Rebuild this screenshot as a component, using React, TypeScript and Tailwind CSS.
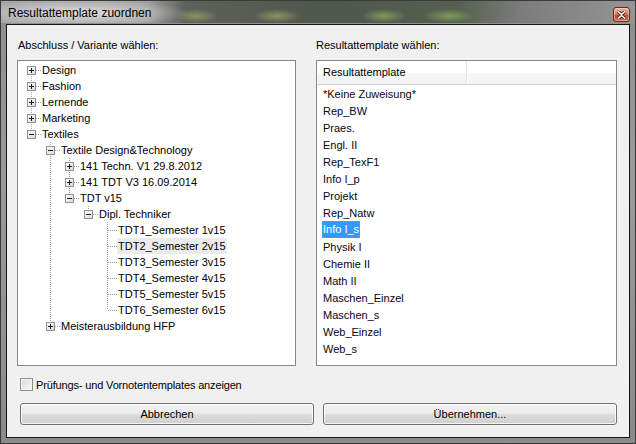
import React from "react";

type TreeNode = {
  label: string;
  anc: boolean[];
  exp?: "+" | "-";
  next: boolean;
  first?: boolean;
  hover?: boolean;
};

const tree: TreeNode[] = [
  { label: "Design", anc: [], exp: "+", next: true, first: true },
  { label: "Fashion", anc: [], exp: "+", next: true },
  { label: "Lernende", anc: [], exp: "+", next: true },
  { label: "Marketing", anc: [], exp: "+", next: true },
  { label: "Textiles", anc: [], exp: "-", next: false },
  { label: "Textile Design&Technology", anc: [false], exp: "-", next: true },
  { label: "141 Techn. V1 29.8.2012", anc: [false, true], exp: "+", next: true },
  { label: "141 TDT V3 16.09.2014", anc: [false, true], exp: "+", next: true },
  { label: "TDT v15", anc: [false, true], exp: "-", next: false },
  { label: "Dipl. Techniker", anc: [false, true, false], exp: "-", next: false },
  { label: "TDT1_Semester 1v15", anc: [false, true, false, false], next: true },
  { label: "TDT2_Semester 2v15", anc: [false, true, false, false], next: true, hover: true },
  { label: "TDT3_Semester 3v15", anc: [false, true, false, false], next: true },
  { label: "TDT4_Semester 4v15", anc: [false, true, false, false], next: true },
  { label: "TDT5_Semester 5v15", anc: [false, true, false, false], next: true },
  { label: "TDT6_Semester 6v15", anc: [false, true, false, false], next: false },
  { label: "Meisterausbildung HFP", anc: [false], exp: "+", next: false },
];

const templates = [
  "*Keine Zuweisung*",
  "Rep_BW",
  "Praes.",
  "Engl. II",
  "Rep_TexF1",
  "Info I_p",
  "Projekt",
  "Rep_Natw",
  "Info I_s",
  "Physik I",
  "Chemie II",
  "Math II",
  "Maschen_Einzel",
  "Maschen_s",
  "Web_Einzel",
  "Web_s",
];

const dot = "#a0a0a0";

function Cell({ up, down, right, exp }: { up?: boolean; down?: boolean; right?: boolean; exp?: "+" | "-" }) {
  return (
    <svg width="19" height="16" className="shrink-0" shapeRendering="crispEdges">
      {up && <line x1="9.5" y1="0" x2="9.5" y2="8" stroke={dot} strokeDasharray="1 1" />}
      {down && <line x1="9.5" y1="8" x2="9.5" y2="16" stroke={dot} strokeDasharray="1 1" />}
      {right && <line x1="10" y1="8.5" x2="19" y2="8.5" stroke={dot} strokeDasharray="1 1" />}
      {exp && (
        <g>
          <rect x="5.5" y="4.5" width="8" height="8" fill="url(#expGrad)" stroke="#919191" />
          <line x1="7" y1="8.5" x2="12" y2="8.5" stroke="#1b1b1b" />
          {exp === "+" && <line x1="9.5" y1="6" x2="9.5" y2="11" stroke="#1b1b1b" />}
        </g>
      )}
    </svg>
  );
}

function TreeRow({ node }: { node: TreeNode }) {
  return (
    <div className="flex h-4 items-center pl-[4px]">
      {node.anc.map((a, i) => (
        <Cell key={i} up={a} down={a} />
      ))}
      <Cell up={!node.first} down={node.next} right exp={node.exp} />
      <span className={`px-[1px] leading-[16px] whitespace-nowrap ${node.hover ? "bg-[#ebebeb]" : ""}`}>
        {node.label}
      </span>
    </div>
  );
}

export default function App() {
  return (
    <div className="w-[636px] h-[444px] flex flex-col border border-[#3a3a3a] bg-[linear-gradient(to_bottom,#8e8e8e,#9a9a9a_40%,#8a8a8a)] font-['Liberation_Sans',Arial,sans-serif] text-[11px] text-black">
      <svg width="0" height="0" className="absolute">
        <defs>
          <linearGradient id="expGrad" x1="0" y1="0" x2="1" y2="1">
            <stop offset="0" stopColor="#ffffff" />
            <stop offset="1" stopColor="#d6d6d6" />
          </linearGradient>
        </defs>
      </svg>

      {/* title bar */}
      <div className="h-[22px] flex items-center justify-between pl-[7px] pr-[5px] bg-[radial-gradient(ellipse_110px_14px_at_78px_12px,rgba(226,226,226,0.95),transparent),radial-gradient(ellipse_22px_7px_at_195px_15px,#8a9460,transparent),radial-gradient(ellipse_24px_7px_at_276px_15px,#88945e,transparent),radial-gradient(ellipse_22px_7px_at_383px_15px,#7f9a5c,transparent),radial-gradient(ellipse_26px_7px_at_448px_15px,#7f9a5c,transparent),linear-gradient(to_right,#a4a4a4_0%,#a0a0a0_23%,#5e615b_29%,#50574c_50%,#556050_72%,#7c7c7c_82%,#949494_100%)]">
        <span className="text-[12px] leading-[14px] mt-[1px] text-black">Resultattemplate zuordnen</span>
        <div className="mt-[5px] w-[17px] h-[15px] rounded-[3px] border border-[#6b2a1e] bg-[linear-gradient(to_bottom,#eab3a3,#d98770_45%,#c64a30_55%,#d0644a)] flex items-center justify-center shadow-[inset_0_0_0_1px_rgba(255,220,210,0.5)]">
          <svg width="9" height="8" viewBox="0 0 9 8">
            <path d="M1 0.5 L4.5 3.5 L8 0.5 M1 7.5 L4.5 4.5 L8 7.5" stroke="#3a1a14" strokeWidth="3" fill="none" />
            <path d="M1 0.5 L4.5 3.5 L8 0.5 M1 7.5 L4.5 4.5 L8 7.5" stroke="#ffffff" strokeWidth="1.6" fill="none" />
          </svg>
        </div>
      </div>

      {/* client area */}
      <div className="mx-[5px] mb-[5px] mt-[1px] flex-1 border border-[#141414] bg-[#f0f0f0] flex flex-col pl-[10px] pr-[12px]">
        <div className="flex gap-[20px]">
          <div className="flex flex-col w-[279px]">
            <div className="pt-[13px] pb-[8px] pl-[1px] leading-[14px]">Abschluss / Variante wählen:</div>
            <div className="h-[306px] border border-[#828790] bg-white pt-[1px]">
              {tree.map((n, i) => (
                <TreeRow key={i} node={n} />
              ))}
            </div>
          </div>
          <div className="flex flex-col w-[301px]">
            <div className="pt-[13px] pb-[8px] leading-[14px]">Resultattemplate wählen:</div>
            <div className="h-[306px] border border-[#828790] bg-white flex flex-col">
              <div className="h-[24px] flex border-b border-[#d5d5d5] bg-[linear-gradient(to_bottom,#ffffff_0%,#ffffff_50%,#f5f6f7_55%,#f1f2f4_100%)]">
                <div className="w-[150px] flex items-center pl-[6px] border-r border-[#e3e4e6] shadow-[1px_0_0_#ffffff]">
                  Resultattemplate
                </div>
              </div>
              {templates.map((t, i) => (
                <div key={i} className="h-[17px] flex items-center pl-[5px]">
                  {t === "Info I_s" ? (
                    <span className="px-[1px] h-[17px] leading-[16px] bg-[#3399ff] text-white outline outline-1 -outline-offset-1 outline-dotted outline-[#c7864a]">
                      {t}
                    </span>
                  ) : (
                    <span className="px-[1px] leading-[16px] text-[#050514]">{t}</span>
                  )}
                </div>
              ))}
            </div>
          </div>
        </div>

        <div className="mt-[12px] flex items-center gap-[3px] pl-[3px] h-[13px]">
          <div className="w-[13px] h-[13px] border border-[#8e8f8f] bg-[linear-gradient(135deg,#dcdcdc,#f6f6f6)] shadow-[inset_0_0_0_1px_#f4f4f4]" />
          <span className="leading-[14px] tracking-[-0.15px]">Prüfungs- und Vornotentemplates anzeigen</span>
        </div>

        <div className="mt-[12px] flex gap-[9px] pl-[3px]">
          {["Abbrechen", "Übernehmen..."].map((b) => (
            <div
              key={b}
              className="w-[294px] h-[22px] rounded-[3px] border border-[#707070] bg-[linear-gradient(to_bottom,#f2f2f2_0%,#ebebeb_50%,#dddddd_50%,#cfcfcf_100%)] shadow-[inset_0_0_0_1px_rgba(255,255,255,0.8)] flex items-center justify-center"
            >
              {b}
            </div>
          ))}
        </div>
      </div>
    </div>
  );
}
